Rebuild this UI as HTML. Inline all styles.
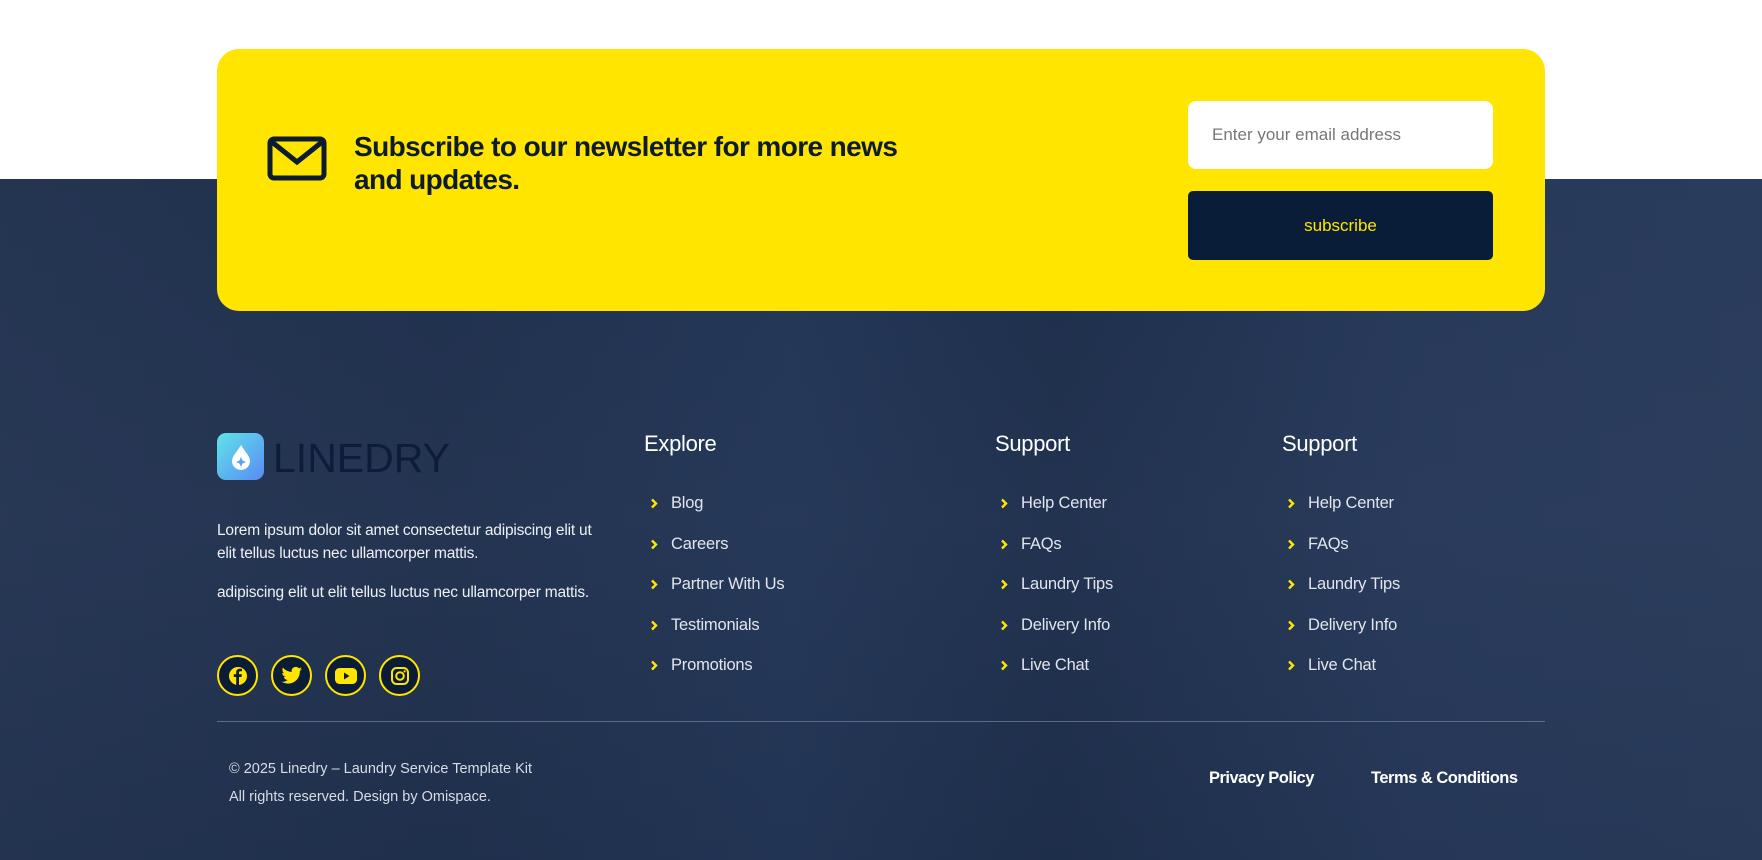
<!DOCTYPE html>
<html><head><meta charset="utf-8"><style>
*{margin:0;padding:0;box-sizing:border-box}
body{width:1762px;height:860px;position:relative;overflow:hidden;background:#fff;font-family:"Liberation Sans",sans-serif}
.bg{position:absolute;left:0;top:179px;width:1762px;height:681px;background:linear-gradient(90deg,#243552 0%,#1f304d 25%,#233656 45%,#1d2e4b 60%,#27395a 80%,#2a3c5b 100%)}
.bg2{position:absolute;left:0;top:179px;width:1762px;height:681px;background:linear-gradient(180deg,rgba(40,55,85,.0) 0%,rgba(50,65,95,.25) 50%,rgba(30,45,72,.2) 100%)}
.box{position:absolute;left:217px;top:49px;width:1328px;height:262px;background:#ffe500;border-radius:22px}
.t{position:absolute;color:#fff}
.h{position:absolute;left:354px;top:130px;font-size:28px;font-weight:bold;color:#0d1b2e;line-height:33px;letter-spacing:-0.6px}
.inp{position:absolute;left:1188px;top:101px;width:305px;height:68px;background:#fff;border-radius:8px;color:#777;font-size:17px;padding:24px 0 0 24px}
.btn{position:absolute;left:1188px;top:191px;width:305px;height:69px;background:#0a1d38;border-radius:5px;color:#ffe500;font-size:17px;text-align:center;line-height:69px}
.col h3{position:absolute;font-size:22px;font-weight:normal;color:#fff;letter-spacing:-0.3px}
.li{position:absolute;font-size:16.5px;color:#e2e5ec;letter-spacing:-0.2px}
.li svg{position:absolute;left:-21px;top:4px}
.soc{position:absolute;top:655px;width:41px;height:41px;border:2px solid #ffe500;border-radius:50%;background:#0b1c36;display:flex;align-items:center;justify-content:center}
.p{position:absolute;left:217px;font-size:15.5px;color:#eef0f4;line-height:23px;letter-spacing:-0.2px}
</style></head><body>
<div class="bg"></div><div class="bg2"></div>
<div class="box"></div>
<svg style="position:absolute;left:267px;top:136px" width="60" height="45" viewBox="0 0 60 45"><rect x="3" y="3" width="54" height="39" rx="4" fill="none" stroke="#0d1b2e" stroke-width="5"/><path d="M5 6 L30 26 L55 6" fill="none" stroke="#0d1b2e" stroke-width="5"/></svg>
<div class="h">Subscribe to our newsletter for more news<br>and updates.</div>
<div class="inp">Enter your email address</div>
<div class="btn">subscribe</div>

<div style="position:absolute;left:217px;top:433px;width:47px;height:47px;border-radius:9px;background:linear-gradient(135deg,#5fe3e9,#5a8bf5)"></div>
<svg style="position:absolute;left:229px;top:443px" width="24" height="28" viewBox="0 0 24 28"><path d="M12 2 C8 9 3 13 3 18 a9 9 0 0 0 18 0 C21 13 16 9 12 2z" fill="#fff"/><path d="M12 14 l1.5 3.5 3.5 1.5 -3.5 1.5 -1.5 3.5 -1.5-3.5 -3.5-1.5 3.5-1.5z" fill="#5aa5f0"/></svg>
<div class="t" style="left:273px;top:435px;font-size:41px;color:#0d1c38;letter-spacing:0px">LINEDRY</div>
<div class="p" style="top:519px">Lorem ipsum dolor sit amet consectetur adipiscing elit ut<br>elit tellus luctus nec ullamcorper mattis.</div>
<div class="p" style="top:581px">adipiscing elit ut elit tellus luctus nec ullamcorper mattis.</div>

<div class="soc" style="left:217px"><svg width="20" height="20" viewBox="0 0 20 20"><circle cx="10" cy="10" r="9" fill="#ffe500"/><path d="M11 19 V11 h2.5 l.4-2.8 H11 V6.6 c0-.8.3-1.300 1.4-1.3 H14 V2.9 c-.3 0-1.2-.1-2.2-.1 -2.2 0-3.6 1.3-3.6 3.7 v1.8 H5.8 V11 h2.4 v8z" fill="#0b1c36"/></svg></div>
<div class="soc" style="left:271px"><svg width="22" height="20" viewBox="0 0 24 20"><path d="M23 2.3c-.8.4-1.7.6-2.6.7.9-.6 1.6-1.4 2-2.5-.9.5-1.900.9-2.9 1.1C18.6.6 17.4 0 16.1 0c-2.5 0-4.600 2-4.600 4.600 0 .4 0 .7.1 1C7.8 5.4 4.4 3.6 2.1.9c-.4.7-.6 1.5-.6 2.3 0 1.6.8 3 2 3.8-.8 0-1.5-.2-2.1-.6v.1c0 2.2 1.6 4.1 3.7 4.5-.4.1-.8.2-1.2.2-.3 0-.6 0-.9-.1.6 1.8 2.3 3.2 4.3 3.2-1.6 1.2-3.6 2-5.7 2-.4 0-.7 0-1.1-.1 2 1.3 4.5 2.1 7 2.1 8.5 0 13.1-7 13.1-13.1v-.6c.9-.6 1.7-1.4 2.4-2.3z" fill="#ffe500"/></svg></div>
<div class="soc" style="left:325px"><svg width="22" height="16" viewBox="0 0 22 16"><rect x="0" y="0" width="22" height="16" rx="4.5" fill="#ffe500"/><path d="M9 4.5 L14.5 8 L9 11.5z" fill="#0b1c36"/></svg></div>
<div class="soc" style="left:379px"><svg width="20" height="20" viewBox="0 0 20 20"><rect x="2" y="2" width="16" height="16" rx="4.5" fill="none" stroke="#ffe500" stroke-width="2"/><circle cx="10" cy="10" r="3.8" fill="none" stroke="#ffe500" stroke-width="2"/><circle cx="14.6" cy="5.4" r="1.1" fill="#ffe500"/></svg></div>

<div class="col"><h3 style="left:644px;top:431px">Explore</h3>
<div class="li" style="left:671px;top:494px"><svg width="8" height="11" viewBox="0 0 8 11"><path d="M2 1.5 L6 5.5 L2 9.5" fill="none" stroke="#ffe500" stroke-width="2.4"/></svg>Blog</div>
<div class="li" style="left:671px;top:535px"><svg width="8" height="11" viewBox="0 0 8 11"><path d="M2 1.5 L6 5.5 L2 9.5" fill="none" stroke="#ffe500" stroke-width="2.4"/></svg>Careers</div>
<div class="li" style="left:671px;top:575px"><svg width="8" height="11" viewBox="0 0 8 11"><path d="M2 1.5 L6 5.5 L2 9.5" fill="none" stroke="#ffe500" stroke-width="2.4"/></svg>Partner With Us</div>
<div class="li" style="left:671px;top:616px"><svg width="8" height="11" viewBox="0 0 8 11"><path d="M2 1.5 L6 5.5 L2 9.5" fill="none" stroke="#ffe500" stroke-width="2.4"/></svg>Testimonials</div>
<div class="li" style="left:671px;top:656px"><svg width="8" height="11" viewBox="0 0 8 11"><path d="M2 1.5 L6 5.5 L2 9.5" fill="none" stroke="#ffe500" stroke-width="2.4"/></svg>Promotions</div></div>

<div class="col"><h3 style="left:995px;top:431px">Support</h3>
<div class="li" style="left:1021px;top:494px"><svg width="8" height="11" viewBox="0 0 8 11"><path d="M2 1.5 L6 5.5 L2 9.5" fill="none" stroke="#ffe500" stroke-width="2.4"/></svg>Help Center</div>
<div class="li" style="left:1021px;top:535px"><svg width="8" height="11" viewBox="0 0 8 11"><path d="M2 1.5 L6 5.5 L2 9.5" fill="none" stroke="#ffe500" stroke-width="2.4"/></svg>FAQs</div>
<div class="li" style="left:1021px;top:575px"><svg width="8" height="11" viewBox="0 0 8 11"><path d="M2 1.5 L6 5.5 L2 9.5" fill="none" stroke="#ffe500" stroke-width="2.4"/></svg>Laundry Tips</div>
<div class="li" style="left:1021px;top:616px"><svg width="8" height="11" viewBox="0 0 8 11"><path d="M2 1.5 L6 5.5 L2 9.5" fill="none" stroke="#ffe500" stroke-width="2.4"/></svg>Delivery Info</div>
<div class="li" style="left:1021px;top:656px"><svg width="8" height="11" viewBox="0 0 8 11"><path d="M2 1.5 L6 5.5 L2 9.5" fill="none" stroke="#ffe500" stroke-width="2.4"/></svg>Live Chat</div></div>

<div class="col"><h3 style="left:1282px;top:431px">Support</h3>
<div class="li" style="left:1308px;top:494px"><svg width="8" height="11" viewBox="0 0 8 11"><path d="M2 1.5 L6 5.5 L2 9.5" fill="none" stroke="#ffe500" stroke-width="2.4"/></svg>Help Center</div>
<div class="li" style="left:1308px;top:535px"><svg width="8" height="11" viewBox="0 0 8 11"><path d="M2 1.5 L6 5.5 L2 9.5" fill="none" stroke="#ffe500" stroke-width="2.4"/></svg>FAQs</div>
<div class="li" style="left:1308px;top:575px"><svg width="8" height="11" viewBox="0 0 8 11"><path d="M2 1.5 L6 5.5 L2 9.5" fill="none" stroke="#ffe500" stroke-width="2.4"/></svg>Laundry Tips</div>
<div class="li" style="left:1308px;top:616px"><svg width="8" height="11" viewBox="0 0 8 11"><path d="M2 1.5 L6 5.5 L2 9.5" fill="none" stroke="#ffe500" stroke-width="2.4"/></svg>Delivery Info</div>
<div class="li" style="left:1308px;top:656px"><svg width="8" height="11" viewBox="0 0 8 11"><path d="M2 1.5 L6 5.5 L2 9.5" fill="none" stroke="#ffe500" stroke-width="2.4"/></svg>Live Chat</div></div>

<div style="position:absolute;left:217px;top:721px;width:1328px;height:1px;background:#5a6a86"></div>
<div class="t" style="left:229px;top:755px;font-size:14.5px;color:#d8dce4;line-height:28px">© 2025 Linedry – Laundry Service Template Kit<br>All rights reserved. Design by Omispace.</div>
<div class="t" style="left:1209px;top:769px;font-size:16.5px;font-weight:bold;letter-spacing:-0.5px">Privacy Policy</div>
<div class="t" style="left:1371px;top:769px;font-size:16.5px;font-weight:bold;letter-spacing:-0.5px">Terms &amp; Conditions</div>
</body></html>
